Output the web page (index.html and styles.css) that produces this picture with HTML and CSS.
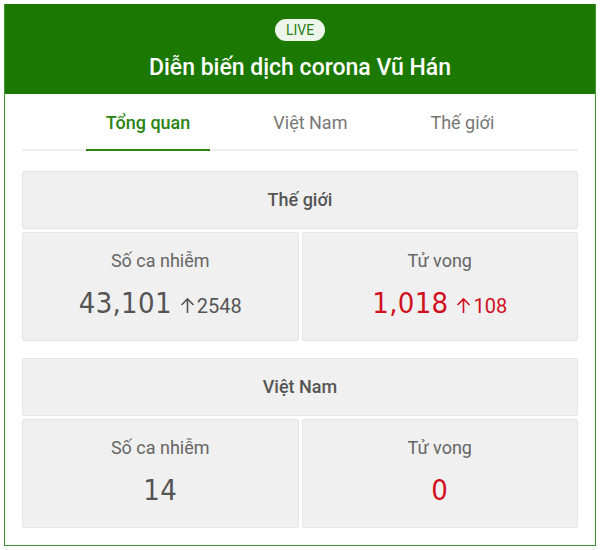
FILE: index.html
```html
<!DOCTYPE html>
<html lang="vi">
<head>
    <meta charset="UTF-8">
    <meta name="viewport" content="width=device-width, initial-scale=1.0">
    <title>Diễn biến dịch corona Vũ Hán</title>
    <link rel="stylesheet" href="styles.css">
</head>
<body>
    <div class="widget">
        <div class="header">
            <span class="live">LIVE</span>
            <h1>Diễn biến dịch corona Vũ Hán</h1>
        </div>

        <div class="content">
            <div class="tabs">
                <div class="tab active">Tổng quan</div>
                <div class="tab">Việt Nam</div>
                <div class="tab">Thế giới</div>
            </div>

            <div class="region">
                <div class="region-title">Thế giới</div>
                <div class="stats">
                    <div class="stat">
                        <div class="label">Số ca nhiễm</div>
                        <div class="value">
                            <span class="num">43,101</span>
                            <span class="delta">
                                <svg class="arrow" width="15" height="17" viewBox="0 0 15 17"><path d="M7.5 16V2M1.5 8L7.5 2l6 6" fill="none" stroke="currentColor" stroke-width="1.6"/></svg>2548
                            </span>
                        </div>
                    </div>
                    <div class="stat deaths">
                        <div class="label">Tử vong</div>
                        <div class="value">
                            <span class="num">1,018</span>
                            <span class="delta">
                                <svg class="arrow" width="15" height="17" viewBox="0 0 15 17"><path d="M7.5 16V2M1.5 8L7.5 2l6 6" fill="none" stroke="currentColor" stroke-width="1.6"/></svg>108
                            </span>
                        </div>
                    </div>
                </div>
            </div>

            <div class="region">
                <div class="region-title">Việt Nam</div>
                <div class="stats">
                    <div class="stat">
                        <div class="label">Số ca nhiễm</div>
                        <div class="value"><span class="num">14</span></div>
                    </div>
                    <div class="stat deaths">
                        <div class="label">Tử vong</div>
                        <div class="value"><span class="num">0</span></div>
                    </div>
                </div>
            </div>
        </div>
    </div>
</body>
</html>
```

FILE: styles.css
```css
body {
    margin: 0;
    padding: 4px;
    font-family: Roboto, "Noto Sans", Arial, sans-serif;
    background-color: #ffffff;
}

.widget {
    width: 590px;
    border: 1px solid #3f9631;
    border-top: none;
    background-color: #ffffff;
}

.header {
    background-color: #1b7800;
    height: 90px;
    display: flex;
    flex-direction: column;
    align-items: center;
    padding-top: 15px;
    box-sizing: border-box;
}

.live {
    display: inline-block;
    background-color: #eef5ea;
    color: #2b7f15;
    font-size: 14px;
    line-height: 22px;
    padding: 0 11px;
    border-radius: 11px;
}

h1 {
    margin: 12px 0 0;
    color: #ffffff;
    font-size: 23px;
    font-weight: 500;
    line-height: 30px;
}

.content {
    padding: 0 17px 17px;
}

.tabs {
    display: flex;
    justify-content: center;
    gap: 43px;
    border-bottom: 2px solid #eeeeee;
}

.tab {
    padding: 18px 20px 15px;
    font-size: 18px;
    line-height: 22px;
    color: #777777;
    margin-bottom: -2px;
    border-bottom: 2px solid transparent;
}

.tab.active {
    color: #2a8312;
    font-weight: 500;
    border-bottom-color: #2a8312;
}

.region {
    margin-top: 20px;
}

.region + .region {
    margin-top: 17px;
}

.region-title,
.stat {
    background-color: #f0f0f0;
    border: 1px solid #e6e6e6;
    border-radius: 2px;
}

.region-title {
    height: 56px;
    line-height: 56px;
    text-align: center;
    font-size: 18px;
    font-weight: 500;
    color: #555555;
}

.stats {
    display: flex;
    gap: 3px;
    margin-top: 3px;
}

.stat {
    flex: 1;
    height: 107px;
    text-align: center;
}

.label {
    margin-top: 16px;
    font-size: 18px;
    line-height: 24px;
    color: #666666;
}

.value {
    margin-top: 12px;
    display: flex;
    justify-content: center;
    align-items: baseline;
    gap: 8px;
    color: #555555;
}

.num {
    font-family: "DejaVu Sans Condensed", "DejaVu Sans", sans-serif;
    font-stretch: condensed;
    font-size: 29px;
    letter-spacing: 0.3px;
    line-height: 36px;
}

.delta {
    font-size: 20px;
}

.arrow {
    vertical-align: -1px;
    margin-right: 2px;
}

.deaths .value {
    color: #d0101e;
}
```
